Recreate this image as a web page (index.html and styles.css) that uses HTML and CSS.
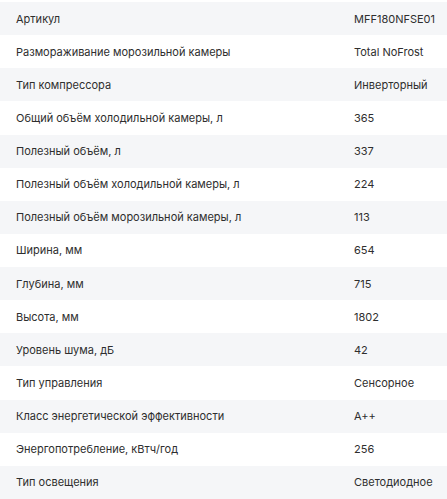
FILE: index.html
```html
<!DOCTYPE html>
<html lang="ru">
<head>
<meta charset="utf-8">
<link rel="stylesheet" href="styles.css">
</head>
<body>
<div class="specs">
  <div class="row"><span class="label">Артикул</span><span class="value">MFF180NFSE01</span></div>
  <div class="row"><span class="label">Размораживание морозильной камеры</span><span class="value">Total NoFrost</span></div>
  <div class="row"><span class="label">Тип компрессора</span><span class="value">Инверторный</span></div>
  <div class="row"><span class="label">Общий объём холодильной камеры, л</span><span class="value">365</span></div>
  <div class="row"><span class="label">Полезный объём, л</span><span class="value">337</span></div>
  <div class="row"><span class="label">Полезный объём холодильной камеры, л</span><span class="value">224</span></div>
  <div class="row"><span class="label">Полезный объём морозильной камеры, л</span><span class="value">113</span></div>
  <div class="row"><span class="label">Ширина, мм</span><span class="value">654</span></div>
  <div class="row"><span class="label">Глубина, мм</span><span class="value">715</span></div>
  <div class="row"><span class="label">Высота, мм</span><span class="value">1802</span></div>
  <div class="row"><span class="label">Уровень шума, дБ</span><span class="value">42</span></div>
  <div class="row"><span class="label">Тип управления</span><span class="value">Сенсорное</span></div>
  <div class="row"><span class="label">Класс энергетической эффективности</span><span class="value">A++</span></div>
  <div class="row"><span class="label">Энергопотребление, кВтч/год</span><span class="value">256</span></div>
  <div class="row"><span class="label">Тип освещения</span><span class="value">Светодиодное</span></div>
</div>
</body>
</html>
```
FILE: styles.css
```css
html, body {
  margin: 0;
  padding: 0;
  background: #ffffff;
}
body {
  font-family: Inter, "Noto Sans", sans-serif;
  font-size: 11px;
  color: #2e2e2e;
}
.specs {
  padding-top: 2px;
  display: flex;
  flex-direction: column;
}
.row {
  display: grid;
  grid-template-columns: 338px 1fr;
  align-items: center;
  height: 33.14px;
  padding-left: 16px;
}
.row:nth-child(odd) {
  background: #f5f6f8;
}
.label, .value {
  line-height: 16px;
  white-space: nowrap;
}
```
